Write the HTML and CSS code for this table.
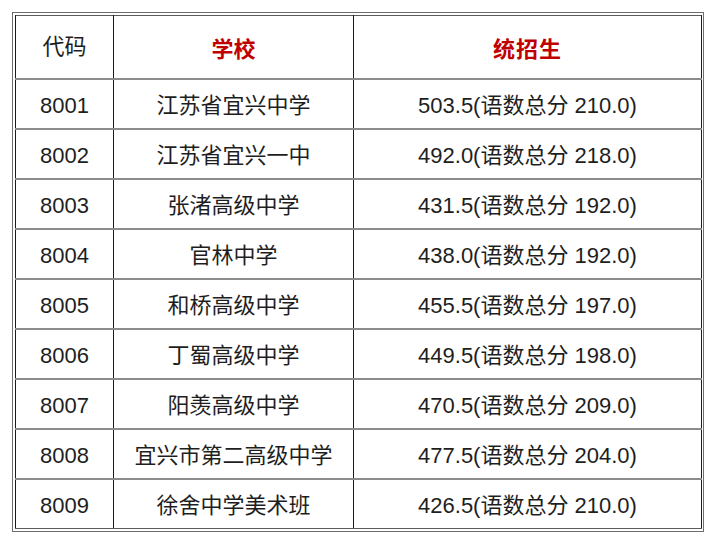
FILE: index.html
```html
<!DOCTYPE html>
<html lang="zh-CN">
<head>
<meta charset="utf-8">
<link rel="stylesheet" href="styles.css">
</head>
<body>
<div class="frame">
<table class="score">
<colgroup><col class="c1"><col class="c2"><col class="c3"></colgroup>
<thead>
<tr><th class="plain">代码</th><th class="red">学校</th><th class="red wide">统招生</th></tr>
</thead>
<tbody>
<tr><td>8001</td><td>江苏省宜兴中学</td><td>503.5(语数总分 210.0)</td></tr>
<tr><td>8002</td><td>江苏省宜兴一中</td><td>492.0(语数总分 218.0)</td></tr>
<tr><td>8003</td><td>张渚高级中学</td><td>431.5(语数总分 192.0)</td></tr>
<tr><td>8004</td><td>官林中学</td><td>438.0(语数总分 192.0)</td></tr>
<tr><td>8005</td><td>和桥高级中学</td><td>455.5(语数总分 197.0)</td></tr>
<tr><td>8006</td><td>丁蜀高级中学</td><td>449.5(语数总分 198.0)</td></tr>
<tr><td>8007</td><td>阳羡高级中学</td><td>470.5(语数总分 209.0)</td></tr>
<tr><td>8008</td><td>宜兴市第二高级中学</td><td>477.5(语数总分 204.0)</td></tr>
<tr><td>8009</td><td>徐舍中学美术班</td><td>426.5(语数总分 210.0)</td></tr>
</tbody>
</table>
</div>
</body>
</html>
```
FILE: styles.css
```css
html, body {
  margin: 0;
  padding: 0;
  background: #ffffff;
}
body {
  padding: 12px 0 0 12px;
  font-family: "Liberation Sans", "Noto Sans CJK SC", sans-serif;
  color: #1e1e1e;
}
.frame {
  width: 686px;
  border: 1px solid #6e6e6e;
  padding: 2px;
}
.score {
  width: 686px;
  table-layout: fixed;
  border-collapse: collapse;
  border: 1px solid #5a5a5a;
}
.c1 { width: 98px; }
.c2 { width: 240px; }
.c3 { width: 348px; }
.score th, .score td {
  text-align: center;
  vertical-align: middle;
  padding: 0;
  border-left: 1px solid #1a1a1a;
  border-right: 1px solid #1a1a1a;
  border-bottom: 2px solid #8c8c8c;
  font-size: 22px;
  line-height: 26px;
}
.score th {
  height: 62px;
  font-weight: normal;
}
.score td {
  height: 45px;
  padding-top: 3px;
}
.score tbody tr:last-child td {
  border-bottom: 1px solid #5a5a5a;
}
.score th.red {
  color: #c00000;
  font-weight: bold;
  font-family: "Noto Sans CJK SC", sans-serif;
}
.score th.wide {
  letter-spacing: 1px;
}
```
